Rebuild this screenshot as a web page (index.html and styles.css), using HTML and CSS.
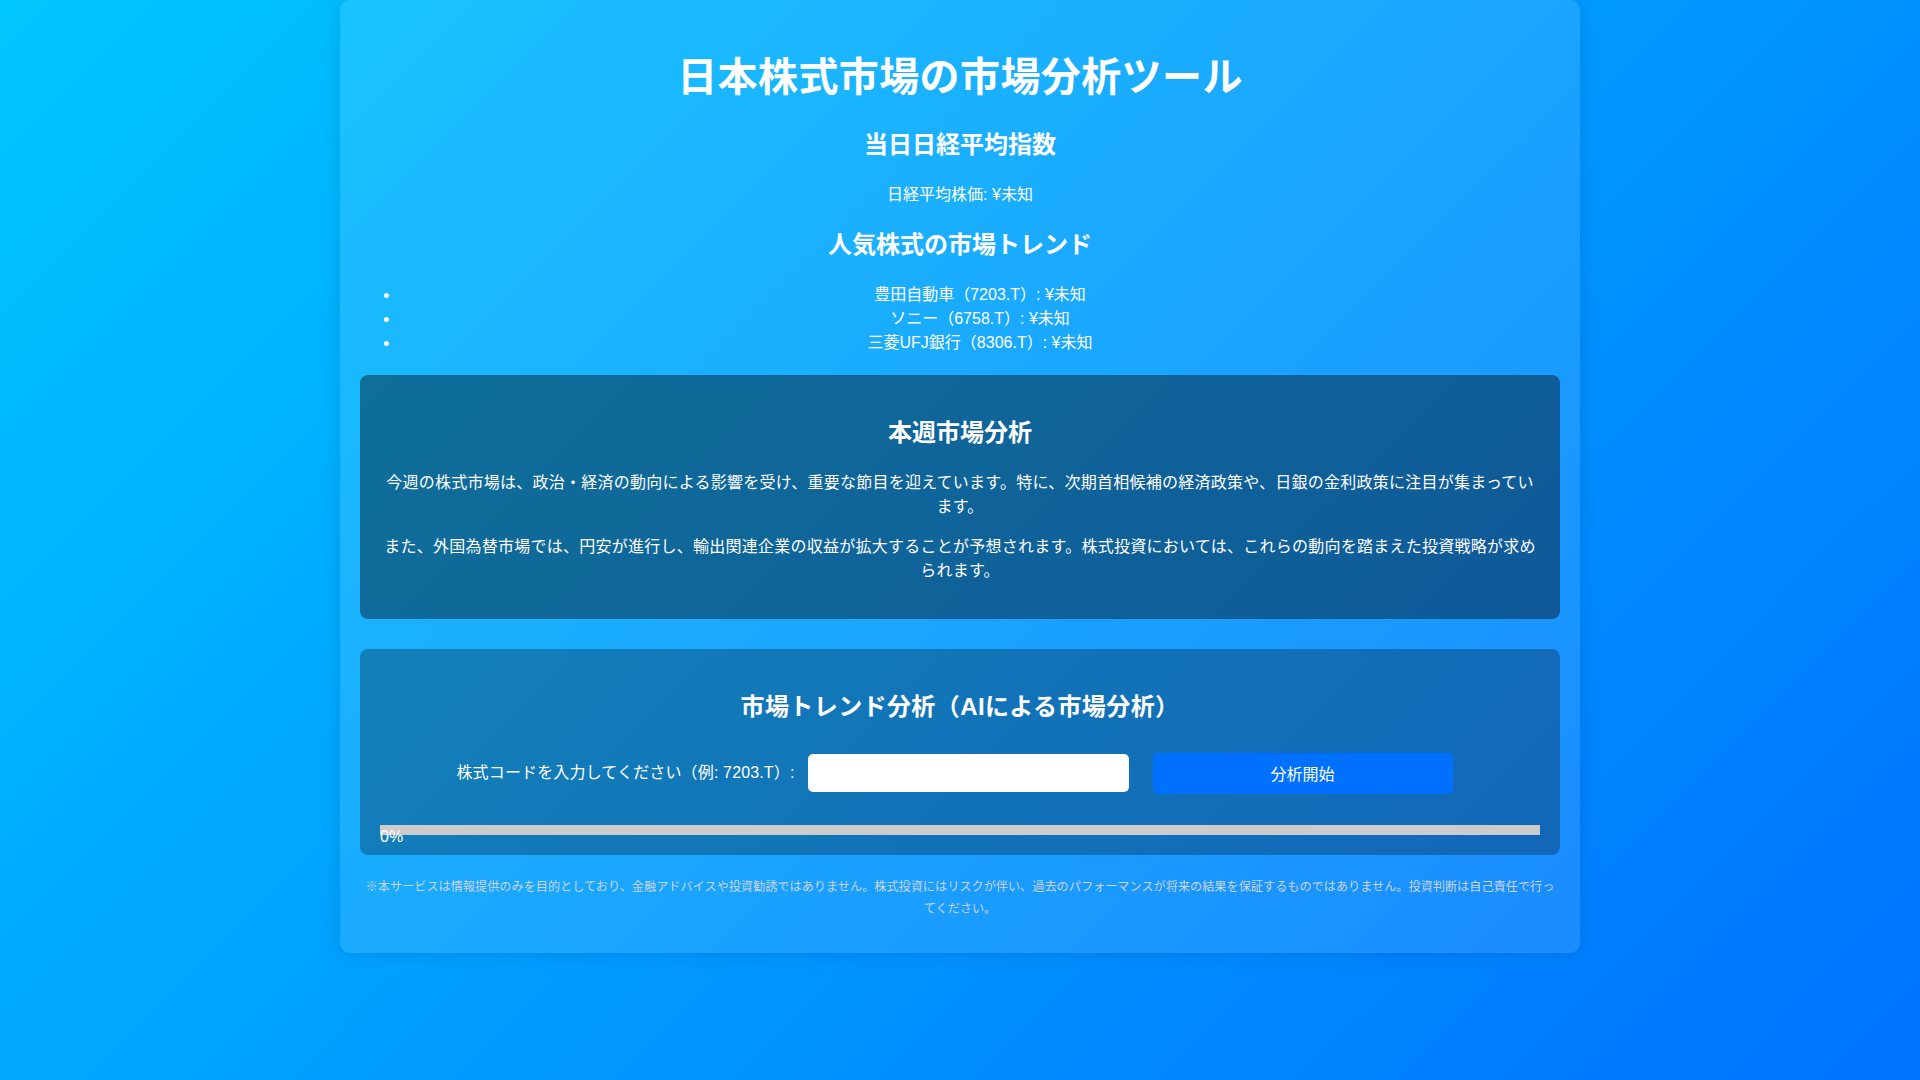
FILE: index.html
```html
<!DOCTYPE html>
<html lang="ja">
<head>
<meta charset="utf-8">
<title>日本株式市場の市場分析ツール</title>
<link rel="stylesheet" href="styles.css">
</head>
<body>
<div class="container">
  <h1 class="title">日本株式市場の市場分析ツール</h1>
  <h2 class="heading">当日日経平均指数</h2>
  <p class="text">日経平均株価: ¥未知</p>
  <h2 class="heading">人気株式の市場トレンド</h2>
  <ul class="stock-list">
    <li>豊田自動車（7203.T）: ¥未知</li>
    <li>ソニー（6758.T）: ¥未知</li>
    <li>三菱UFJ銀行（8306.T）: ¥未知</li>
  </ul>
  <section class="panel panel-weekly">
    <h2 class="heading">本週市場分析</h2>
    <p class="text panel-text">今週の株式市場は、政治・経済の動向による影響を受け、重要な節目を迎えています。特に、次期首相候補の経済政策や、日銀の金利政策に注目が集まっています。</p>
    <p class="text panel-text">また、外国為替市場では、円安が進行し、輸出関連企業の収益が拡大することが予想されます。株式投資においては、これらの動向を踏まえた投資戦略が求められます。</p>
  </section>
  <section class="panel panel-ai">
    <h2 class="heading heading-wide">市場トレンド分析（AIによる市場分析）</h2>
    <div class="form-row">
      <label class="form-label" for="code">株式コードを入力してください（例: 7203.T）:</label>
      <input class="form-input" id="code" type="text">
      <button class="form-button" type="button">分析開始</button>
    </div>
    <div class="progress">
      <div class="progress-bar">0%</div>
    </div>
  </section>
  <footer class="disclaimer">※本サービスは情報提供のみを目的としており、金融アドバイスや投資勧誘ではありません。株式投資にはリスクが伴い、過去のパフォーマンスが将来の結果を保証するものではありません。投資判断は自己責任で行ってください。</footer>
</div>
</body>
</html>
```

FILE: styles.css
```css
html, body {
  margin: 0;
  padding: 0;
}

body {
  min-height: 1080px;
  background: linear-gradient(135deg, #00c6ff, #0072ff);
  font-family: "Liberation Sans", "Noto Sans CJK JP", sans-serif;
  color: #fff;
  line-height: 1.5;
}

.container {
  box-sizing: border-box;
  width: 1240px;
  margin: 0 auto;
  padding: 20px 20px 18px;
  background: rgba(255, 255, 255, 0.1);
  border-radius: 10px;
  box-shadow: 0 0 20px rgba(0, 0, 0, 0.12);
  text-align: center;
}

.title {
  font-size: 40px;
  line-height: 60px;
  font-weight: bold;
  letter-spacing: 0.4px;
  margin: 27px 0 20px;
}

.heading {
  font-size: 24px;
  line-height: 36px;
  font-weight: bold;
  margin: 20px 0;
}

.heading-wide {
  letter-spacing: 0.4px;
}

.text {
  font-size: 16px;
  line-height: 24px;
  margin: 16px 0;
}

.panel-text {
  letter-spacing: 0.25px;
}

.stock-list {
  margin: 20px 0;
  padding-left: 40px;
  font-size: 16px;
  line-height: 24px;
}

.panel {
  border-radius: 8px;
  padding: 20px;
}

.panel-weekly {
  margin: 20px 0 30px;
  background: rgba(0, 0, 0, 0.4);
}

.panel-ai {
  margin: 0;
  background: rgba(0, 0, 0, 0.28);
}

.form-row {
  display: flex;
  justify-content: center;
  align-items: center;
  margin-top: 27.7px;
  height: 41px;
}

.form-label {
  font-size: 16px;
  line-height: 24px;
  letter-spacing: 0.15px;
  margin-right: 13px;
}

.form-input {
  box-sizing: border-box;
  width: 321px;
  height: 38px;
  border: none;
  border-radius: 5px;
  background: #fff;
  margin-right: 24px;
}

.form-button {
  box-sizing: border-box;
  width: 300px;
  height: 41px;
  border: none;
  border-radius: 5px;
  background: #0070ff;
  color: #fff;
  font-family: "Liberation Sans", "Noto Sans CJK JP", sans-serif;
  font-size: 16px;
  margin-right: 11px;
}

.progress {
  margin-top: 31.3px;
  height: 10px;
  background: #ccc;
}

.progress-bar {
  width: 0;
  height: 10px;
  font-size: 16px;
  line-height: 24px;
  color: #fff;
  text-align: left;
  white-space: nowrap;
}

.disclaimer {
  display: block;
  margin: 21px 0 15px;
  font-size: 12.16px;
  line-height: 22px;
  color: #c8d4de;
}
```
